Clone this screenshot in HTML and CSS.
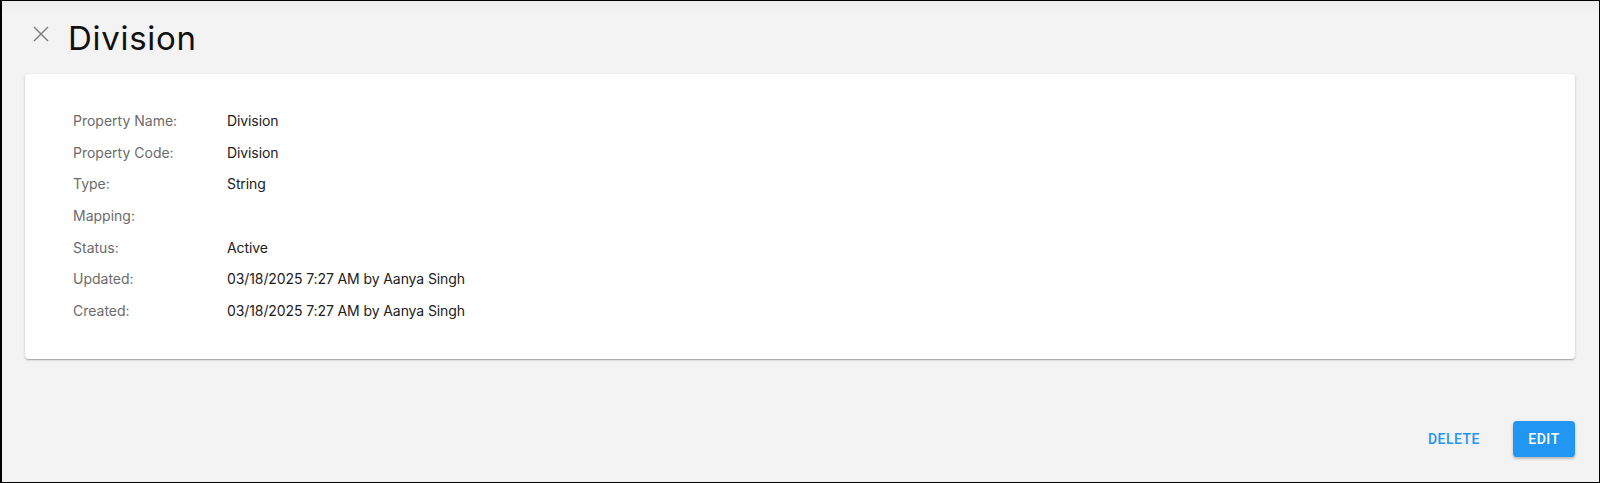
FILE: index.html
```html
<!DOCTYPE html>
<html>
<head>
<meta charset="utf-8">
<link rel="stylesheet" href="styles.css">
</head>
<body>
<div class="frame">
  <header class="header">
    <button class="close" aria-label="Close">
      <svg width="16" height="16" viewBox="0 0 16 16"><path d="M1 1L15 15M15 1L1 15" stroke="#7a7a7a" stroke-width="1.4" fill="none"/></svg>
    </button>
    <h1 class="title">Division</h1>
  </header>
  <section class="card">
    <div class="row"><span class="label">Property Name:</span><span class="value">Division</span></div>
    <div class="row"><span class="label">Property Code:</span><span class="value">Division</span></div>
    <div class="row"><span class="label">Type:</span><span class="value">String</span></div>
    <div class="row"><span class="label">Mapping:</span><span class="value"></span></div>
    <div class="row"><span class="label">Status:</span><span class="value">Active</span></div>
    <div class="row"><span class="label">Updated:</span><span class="value">03/18/2025 7:27 AM by Aanya Singh</span></div>
    <div class="row"><span class="label">Created:</span><span class="value">03/18/2025 7:27 AM by Aanya Singh</span></div>
  </section>
  <footer class="actions">
    <button class="btn-text">DELETE</button>
    <button class="btn-primary">EDIT</button>
  </footer>
</div>
</body>
</html>
```

FILE: styles.css
```css
html, body {
  margin: 0;
  padding: 0;
}
body {
  font-family: Inter, "Noto Sans", sans-serif;
  background: #f3f3f3;
}
.frame {
  height: 483px;
  box-sizing: border-box;
  border: 1px solid #000;
  border-left-width: 2px;
  background: linear-gradient(to bottom, #ededed 0px, #f3f3f3 14px, #f3f3f3 100%);
  display: flex;
  flex-direction: column;
  padding: 17px 24px 25px 23px;
}
.header {
  display: flex;
  align-items: flex-start;
  height: 40px;
}
.close {
  border: none;
  background: none;
  padding: 0;
  margin: 8px 0 0 8px;
  width: 16px;
  height: 16px;
  display: flex;
}
.title {
  margin: 0 0 0 19px;
  font-family: Inter, "Noto Sans", sans-serif;
  font-weight: 400;
  font-size: 33px;
  line-height: 40px;
  color: #111;
  letter-spacing: 0.7px;
}
.card {
  margin-top: 16px;
  background: #fff;
  border-radius: 4px;
  box-shadow: 0 1px 3px rgba(0,0,0,0.18), 0 1px 1px rgba(0,0,0,0.12), 0 2px 1px -1px rgba(0,0,0,0.1);
  padding: 31px 48px 32px 48px;
}
.row {
  display: flex;
  font-size: 14px;
  line-height: 31.7px;
  height: 31.7px;
}
.label {
  width: 154px;
  color: #6b6b6b;
}
.value {
  color: #212121;
  letter-spacing: -0.1px;
}
.actions {
  margin-top: auto;
  display: flex;
  justify-content: flex-end;
  align-items: center;
  gap: 17px;
}
.btn-text {
  border: none;
  background: none;
  font-family: Roboto, "Liberation Sans", sans-serif;
  font-weight: 500;
  font-size: 14px;
  letter-spacing: 0.5px;
  color: #2196f3;
  height: 36px;
  padding: 0 16px;
}
.btn-primary {
  border: none;
  background: #2196f3;
  color: #fff;
  font-family: Roboto, "Liberation Sans", sans-serif;
  font-weight: 500;
  font-size: 14px;
  letter-spacing: 0.5px;
  height: 36px;
  width: 62px;
  padding: 0;
  border-radius: 4px;
  box-shadow: 0 2px 2px rgba(0,0,0,0.16), 0 1px 4px rgba(0,0,0,0.12);
}
```
